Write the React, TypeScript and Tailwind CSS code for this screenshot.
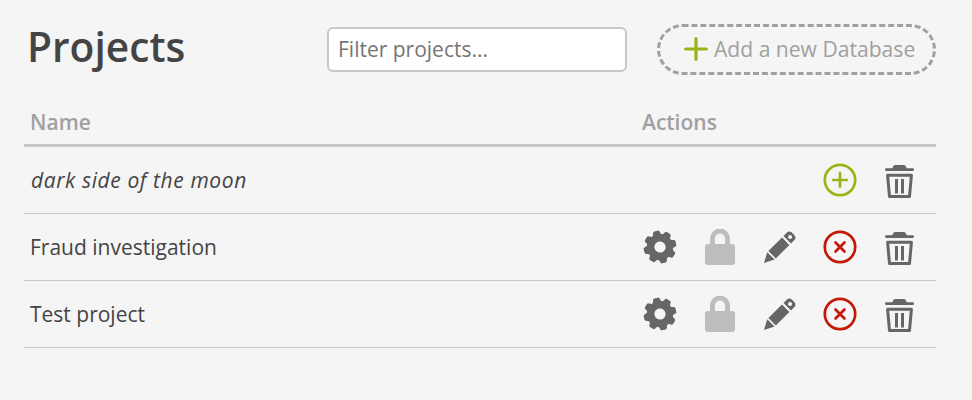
import type { ReactNode } from "react";

function GearIcon() {
  const angles = [0, 45, 90, 135, 180, 225, 270, 315];
  return (
    <svg className="size-9" viewBox="0 0 36 36" fill="#666">
      <g transform="translate(18 18) rotate(-14)">
        {angles.map((angle) => (
          <path
            key={angle}
            transform={`rotate(${angle})`}
            d="M-6-10.5C-4.5-11.8-3.8-13-3.5-14.6Q-3.3-16.2-1.9-16.4H1.9Q3.3-16.2 3.5-14.6C3.8-13 4.5-11.8 6-10.5Z"
          />
        ))}
        <circle r="9.3" fill="none" stroke="#666" strokeWidth="7.4" />
      </g>
    </svg>
  );
}

function LockIcon() {
  return (
    <svg className="size-9" viewBox="0 0 36 36">
      <path d="M10.5 17V9.5a7.5 7.5 0 0 1 15 0V17" fill="none" stroke="#bdbdbd" strokeWidth="4.8" />
      <rect x="3" y="15" width="30" height="21" rx="3" fill="#bdbdbd" />
    </svg>
  );
}

function PencilIcon() {
  return (
    <svg className="size-9" viewBox="0 0 36 36" fill="#666">
      <path d="M2 34L5.2 23.2L12.6 30.6Z" />
      <path d="M6.4 22L20 8.5L27.4 15.9L13.8 29.4Z" />
      <path
        fillRule="evenodd"
        d="M21.5 7L24.9 3.6Q27.3 1.4 29.8 3.5L32.5 6.2Q34.6 8.7 32.4 11.1L29 14.5ZM28.1 6.1a2 2 0 1 0 .01 0Z"
      />
    </svg>
  );
}

function PlusCircleIcon() {
  return (
    <svg className="size-9" viewBox="0 0 36 36" fill="none" stroke="#9ab51a" strokeWidth="2.7" strokeLinecap="round">
      <circle cx="18" cy="18" r="15.2" />
      <path d="M18 11.2v13.6M11.2 18h13.6" />
    </svg>
  );
}

function CrossCircleIcon() {
  return (
    <svg className="size-9" viewBox="0 0 36 36" fill="none" stroke="#c41808" strokeWidth="2.7" strokeLinecap="round">
      <circle cx="18" cy="18" r="15.2" />
      <path d="M13.5 13.5l9 9M22.5 13.5l-9 9" />
    </svg>
  );
}

function TrashIcon() {
  return (
    <svg className="size-9" viewBox="0 0 36 36" fill="#666">
      <path d="M4 6.2H10.2L11.6 3.7Q12.1 3 13 3H22Q22.9 3 23.4 3.7L24.8 6.2H31Q32 6.2 32 7.6Q32 9 31 9H4Q3 9 3 7.6Q3 6.2 4 6.2Z" />
      <path d="M5.6 13.3H29.4L27.5 34.5H7.5Z" fill="none" stroke="#666" strokeWidth="3" strokeLinejoin="round" />
      <rect x="13" y="17" width="3" height="14.5" />
      <rect x="19" y="17" width="3" height="14.5" />
    </svg>
  );
}

function IconButton({ label, children }: { label: string; children: ReactNode }) {
  return (
    <button type="button" aria-label={label} className="size-9">
      {children}
    </button>
  );
}

const projects = [
  { name: "dark side of the moon", open: false },
  { name: "Fraud investigation", open: true },
  { name: "Test project", open: true },
];

export default function App() {
  return (
    <main className="h-[400px] w-[972px] bg-[#f5f5f5] pr-9 pl-6 pt-6 font-['Open_Sans',sans-serif] text-[#444]">
      <header className="flex h-[51px] items-center">
        <h1 className="-mt-[7px] w-[303px] pl-[3px] text-[40.7px] leading-[50px] font-semibold">Projects</h1>
        <input
          placeholder="Filter projects..."
          className="h-[45px] w-[300px] rounded-md border-2 border-[#c8c8c8] bg-white px-[9px] pb-px text-[21px] placeholder:text-[#757575]"
        />
        <button
          type="button"
          className="ml-[30px] flex h-[51px] w-[279px] items-center rounded-full border-3 border-dashed border-[#a0a0a0] pl-6 text-[21.1px] whitespace-nowrap text-[#a0a0a0]"
        >
          <svg className="mr-[6px] mb-px size-6 shrink-0" viewBox="0 0 24 24" stroke="#9ab51a" strokeWidth="3.2" strokeLinecap="round">
            <path d="M12 1.7v20.6M1.7 12h20.6" />
          </svg>
          <span className="-mt-[2px]">Add a new Database</span>
        </button>
      </header>
      <div className="mt-[25px] flex h-[47px] items-center border-b-3 border-[#c8c8c8] pt-[2px] text-[21px] font-semibold text-[#a0a0a0]">
        <span className="w-[618px] pl-[6px]">Name</span>
        <span>Actions</span>
      </div>
      {projects.map((project) => (
        <div key={project.name} className="flex h-[67px] items-center border-b border-[#c8c8c8] pl-[6px]">
          <span
            className={
              project.open
                ? "grow pt-px text-[21px]"
                : "grow pt-px pl-px text-[21px] tracking-[0.6px] italic"
            }
          >
            {project.name}
          </span>
          <div className="flex gap-6 pr-[18px]">
            {project.open && (
              <>
                <IconButton label="Settings"><GearIcon /></IconButton>
                <IconButton label="Lock"><LockIcon /></IconButton>
                <IconButton label="Rename"><PencilIcon /></IconButton>
              </>
            )}
            <IconButton label={project.open ? "Close" : "Open"}>
              {project.open ? <CrossCircleIcon /> : <PlusCircleIcon />}
            </IconButton>
            <IconButton label="Delete"><TrashIcon /></IconButton>
          </div>
        </div>
      ))}
    </main>
  );
}
